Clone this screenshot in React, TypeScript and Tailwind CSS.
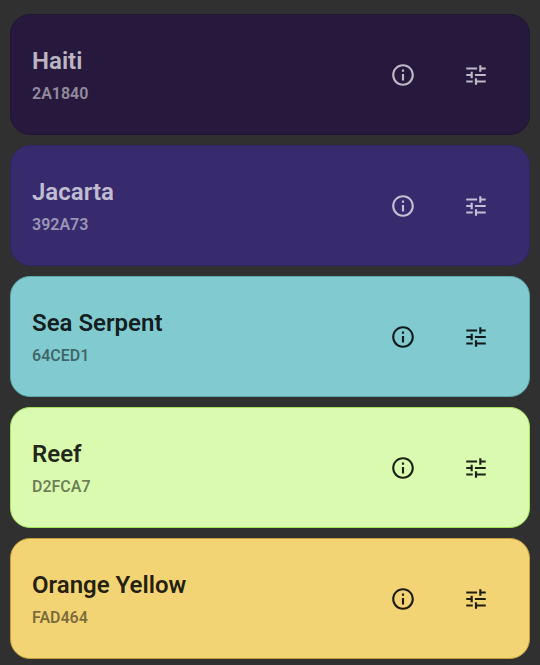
import clsx from "clsx";
import { MdInfoOutline, MdTune } from "react-icons/md";

type Swatch = {
  name: string;
  hex: string;
  card: string;
  light?: boolean;
};

const swatches: Swatch[] = [
  { name: "Haiti", hex: "2A1840", card: "bg-[#27193d] border-[#211534]" },
  { name: "Jacarta", hex: "392A73", card: "bg-[#372b6e] border-[#2f2562]" },
  { name: "Sea Serpent", hex: "64CED1", card: "bg-[#81cbd0] border-[#5fa9ad]", light: true },
  { name: "Reef", hex: "D2FCA7", card: "bg-[#dafbaf] border-[#a4e25c]", light: true },
  { name: "Orange Yellow", hex: "FAD464", card: "bg-[#f2d474] border-[#c7a03c]", light: true },
];

function SwatchCard({ name, hex, card, light }: Swatch) {
  return (
    <li
      className={clsx(
        "flex h-[121px] items-center justify-between rounded-[20px] border pr-[40px] pl-[21px]",
        card,
        light ? "text-black/87" : "text-white/70",
      )}
    >
      <div>
        <h2 className="text-[24px] leading-[34px] font-semibold">{name}</h2>
        <p
          className={clsx(
            "mt-1 text-[16px] leading-6 font-semibold",
            light ? "text-black/50" : "text-white/50",
          )}
        >
          {hex}
        </p>
      </div>
      <div className="flex items-center gap-[47px]">
        <button type="button" aria-label={`About ${name}`}>
          <MdInfoOutline className="size-[26px]" />
        </button>
        <button type="button" aria-label={`Adjust ${name}`}>
          <MdTune className="size-[26px]" />
        </button>
      </div>
    </li>
  );
}

export default function App() {
  return (
    <main className="min-h-screen bg-[#303030] px-[10px] pt-[14px] font-[Roboto,sans-serif]">
      <ul className="flex flex-col gap-[10px]">
        {swatches.map((swatch) => (
          <SwatchCard key={swatch.hex} {...swatch} />
        ))}
      </ul>
    </main>
  );
}
